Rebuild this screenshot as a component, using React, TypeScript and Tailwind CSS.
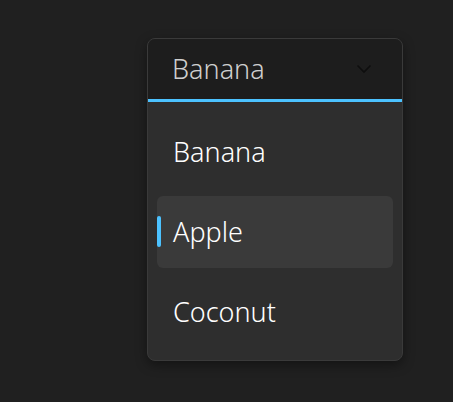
import React from "react";

export default function App() {
  const items = ["Banana", "Apple", "Coconut"];
  return (
    <div className="w-[453px] h-[402px] bg-[#202020] pt-[38px] pl-[147px]" style={{ fontFamily: '"Noto Sans", sans-serif' }}>
      <div className="w-[256px] h-[323px] rounded-[8px] border border-[#3a3a3a] bg-[#2e2e2e] overflow-hidden flex flex-col shadow-[0_4px_12px_rgba(0,0,0,0.4)]">
        <div className="h-[60px] bg-[#1d1d1d] flex items-center justify-between pl-[24px] pr-[30px] shrink-0">
          <span className="text-[27px] text-[#cfcfcf] font-light">Banana</span>
          <svg width="16" height="10" viewBox="0 0 16 10" fill="none">
            <path d="M1.5 1.5 L8 8 L14.5 1.5" stroke="#0e0e0e" strokeWidth="1.6" />
          </svg>
        </div>
        <div className="h-[3px] bg-[#4cc2ff] shrink-0" />
        <div className="flex flex-col gap-[8px] pt-[14px] px-[9px]">
          {items.map((it) => (
            <div
              key={it}
              className={`relative h-[72px] rounded-[6px] flex items-center pl-[16px] ${it === "Apple" ? "bg-[#3a3a3a]" : ""}`}
            >
              {it === "Apple" && (
                <div className="absolute left-0 top-[20px] h-[31px] w-[4px] rounded-full bg-[#4cc2ff]" />
              )}
              <span className="text-[27px] text-white font-light">{it}</span>
            </div>
          ))}
        </div>
      </div>
    </div>
  );
}
